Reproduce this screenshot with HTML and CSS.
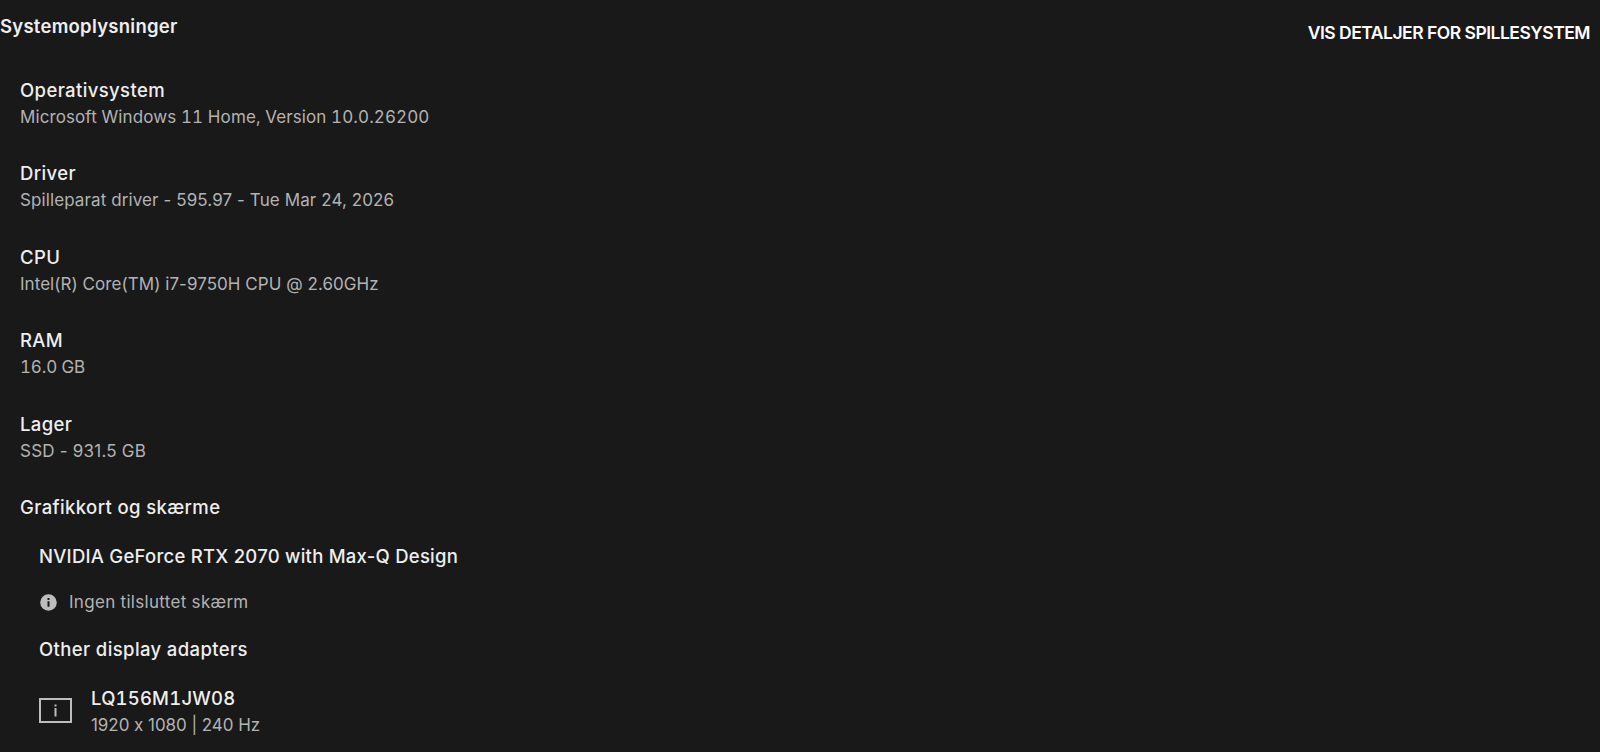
FILE: index.html
```html
<!DOCTYPE html>
<html lang="da">
<head>
  <meta charset="UTF-8" />
  <meta name="viewport" content="width=device-width, initial-scale=1.0"/>
  <title>Systemoplysninger</title>
  <link rel="stylesheet" href="styles.css">
</head>
<body>

  <header class="page-header">
    <h1 class="page-title">Systemoplysninger</h1>
    <button type="button" class="details-btn">VIS DETALJER FOR SPILLESYSTEM</button>
  </header>

  <main class="system-info">
    <section class="info-item">
      <h2 class="label">Operativsystem</h2>
      <p class="value os-value">Microsoft Windows 11 Home, Version 10.0.26200</p>
    </section>
    <section class="info-item">
      <h2 class="label">Driver</h2>
      <p class="value driver-value">Spilleparat driver - 595.97 - Tue Mar 24, 2026</p>
    </section>
    <section class="info-item">
      <h2 class="label">CPU</h2>
      <p class="value cpu-value">Intel(R) Core(TM) i7-9750H CPU @ 2.60GHz</p>
    </section>
    <section class="info-item">
      <h2 class="label">RAM</h2>
      <p class="value ram-value">16.0 GB</p>
    </section>
    <section class="info-item">
      <h2 class="label">Lager</h2>
      <p class="value storage-value">SSD - 931.5 GB</p>
    </section>

    <section class="graphics">
      <h2 class="label">Grafikkort og skærme</h2>
      <h3 class="label adapter gpu-label">NVIDIA GeForce RTX 2070 with Max-Q Design</h3>
      <div class="notice">
        <svg class="info-icon" viewBox="0 0 17 17">
          <circle cx="8.5" cy="8.5" r="8.3" fill="#bdbdbd"/>
          <path d="M7.5 4h2v2h-2zM7.5 7.3h2v5.4h-2z" fill="#191919"/>
        </svg>
        <p class="value notice-value">Ingen tilsluttet skærm</p>
      </div>
      <h3 class="label adapter other-label">Other display adapters</h3>
      <div class="display">
        <svg class="display-icon" viewBox="0 0 33 25">
          <rect x="1" y="1" width="31" height="23" fill="none" stroke="#bdbdbd" stroke-width="2"/>
          <path d="M15.5 6.5h2v2h-2zM15.5 10h2v8.5h-2z" fill="#bdbdbd"/>
        </svg>
        <div class="display-text">
          <h4 class="label display-label">LQ156M1JW08</h4>
          <p class="value display-value">1920 x 1080 | 240 Hz</p>
        </div>
      </div>
    </section>
  </main>

</body>
</html>
```
FILE: styles.css
```css
* {
  box-sizing: border-box;
}

body {
  margin: 0;
  min-height: 100vh;
  background: #191919;
  color: #eee;
  font-family: Inter, sans-serif;
  font-feature-settings: "calt" 0;
}

h1, h2, h3, h4, p {
  margin: 0;
}

.page-header {
  display: flex;
  justify-content: space-between;
  height: 77px;
  padding: 13px 10px 0 0;
}

.page-title {
  font-size: 18.5px;
  font-weight: 600;
  line-height: 27px;
  letter-spacing: 0.26px;
}

.details-btn {
  height: 39px;
  padding: 0;
  border: none;
  background: none;
  color: #fff;
  font: 600 17.5px Inter, sans-serif;
  letter-spacing: -0.5px;
}

.system-info {
  padding-left: 20px;
}

.info-item {
  height: 83.4px;
}

.label {
  font-size: 18.5px;
  font-weight: 500;
  line-height: 26px;
  letter-spacing: 0.38px;
  white-space: nowrap;
}

.value {
  color: #b3b3b3;
  font-size: 17px;
  line-height: 28px;
  white-space: nowrap;
}

.os-value,
.ram-value,
.display-label {
  font-variant-numeric: tabular-nums;
}

.os-value,
.driver-value {
  letter-spacing: 0.1px;
}

.cpu-value {
  letter-spacing: 0.05px;
}

.ram-value {
  letter-spacing: -0.15px;
}

.storage-value {
  letter-spacing: 0.22px;
}

.adapter {
  margin: 23px 0 0 19px;
}

.gpu-label {
  letter-spacing: 0.25px;
}

.notice {
  display: flex;
  align-items: center;
  gap: 12px;
  margin: 19px 0 0 20px;
}

.info-icon {
  width: 17px;
  height: 17px;
  margin-top: 1px;
}

.notice-value {
  letter-spacing: 0.3px;
}

.other-label {
  margin-top: 20px;
}

.display {
  display: flex;
  align-items: center;
  gap: 19px;
  margin: 23px 0 0 19px;
}

.display-icon {
  width: 33px;
  height: 25px;
  margin-bottom: 3px;
}

.display-label {
  letter-spacing: 0.2px;
}

.display-value {
  letter-spacing: -0.05px;
}
```
